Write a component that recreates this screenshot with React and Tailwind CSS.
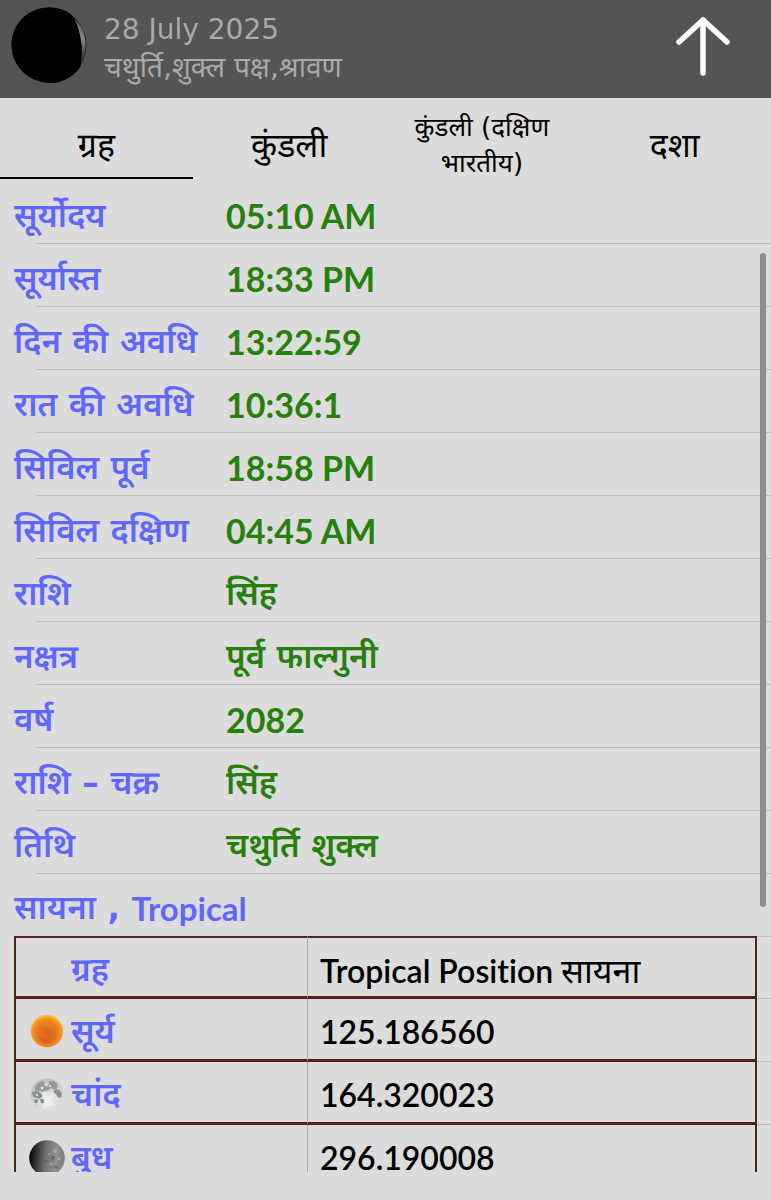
import { useState } from 'react';

const latinFont = "font-['Lato','Noto_Sans_Devanagari','Noto_Sans',sans-serif] [font-variant-ligatures:none]";
const hindiFont = "font-['DejaVu_Sans','Noto_Sans_Devanagari','Noto_Sans',sans-serif]";

const tabs = [
  { id: 'grah', label: 'ग्रह' },
  { id: 'kundli', label: 'कुंडली' },
  { id: 'kundli-south', label: 'कुंडली (दक्षिण भारतीय)', small: true },
  { id: 'dasha', label: 'दशा' },
];

const details = [
  { label: 'सूर्योदय', value: '05:10 AM' },
  { label: 'सूर्यास्त', value: '18:33 PM' },
  { label: 'दिन की अवधि', value: '13:22:59' },
  { label: 'रात की अवधि', value: '10:36:1' },
  { label: 'सिविल पूर्व', value: '18:58 PM' },
  { label: 'सिविल दक्षिण', value: '04:45 AM' },
  { label: 'राशि', value: 'सिंह', hindi: true },
  { label: 'नक्षत्र', value: 'पूर्व फाल्गुनी', hindi: true },
  { label: 'वर्ष', value: '2082' },
  { label: 'राशि – चक्र', value: 'सिंह', hindi: true },
  { label: 'तिथि', value: 'चथुर्ति शुक्ल', hindi: true },
];

const planets = [
  { name: 'सूर्य', position: '125.186560', Icon: SunIcon },
  { name: 'चांद', position: '164.320023', Icon: MoonIcon },
  { name: 'बुध', position: '296.190008', Icon: MercuryIcon },
];

function PhaseIcon() {
  return (
    <svg viewBox="0 0 76 76" className="w-[76px] h-[76px] shrink-0" aria-hidden="true">
      <defs>
        <linearGradient id="phase" x1="0" x2="0" y1="0" y2="1">
          <stop offset="0.1" stopColor="#666" />
          <stop offset="0.45" stopColor="#858585" />
          <stop offset="0.8" stopColor="#3c3c3c" />
        </linearGradient>
      </defs>
      <circle cx="38" cy="38" r="37.5" fill="#1c1c1c" />
      <path d="M62 11 C71 18 75 28 74.500 39 C74 48 72 54 70 59 C72 44 71 24 62 11Z" fill="url(#phase)" />
      <path d="M38 0.500 C50 0.500 58 4 63 11 C68 22 70 34 70.500 40 C70.500 48 70 54 69.500 60 C62 70 51 76 40 76 C18 76 0.500 59 0.500 38 C0.500 17 17 0.500 38 0.500Z" fill="#000" />
    </svg>
  );
}

function SunIcon() {
  return (
    <svg viewBox="0 0 36 36" className="w-9 h-9" aria-hidden="true">
      <defs>
        <radialGradient id="sun" cx="0.5" cy="0.56" r="0.52">
          <stop offset="0" stopColor="#dc6420" />
          <stop offset="0.6" stopColor="#e6791e" />
          <stop offset="0.88" stopColor="#f3971f" />
          <stop offset="1" stopColor="#fbbd3c" />
        </radialGradient>
        <filter id="sun-blur">
          <feGaussianBlur stdDeviation="1.5" />
        </filter>
      </defs>
      <circle cx="18" cy="17" r="16.300" fill="url(#sun)" />
      <g filter="url(#sun-blur)">
        <path d="M8 11q5-5 10-2t8-1q-3 6-9 4t-9-1z" fill="#ef8c1c" opacity="0.7" />
        <path d="M10 22q6 5 15 1q-3 7-9 6t-6-7z" fill="#cf541c" opacity="0.6" />
      </g>
    </svg>
  );
}

function MoonIcon() {
  return (
    <svg viewBox="0 0 36 36" className="w-9 h-9" aria-hidden="true">
      <defs>
        <radialGradient id="moon" cx="0.55" cy="0.65" r="0.6">
          <stop offset="0" stopColor="#ececec" />
          <stop offset="0.7" stopColor="#d6d8d8" />
          <stop offset="1" stopColor="#bcc0c0" />
        </radialGradient>
        <filter id="moon-blur">
          <feGaussianBlur stdDeviation="0.6" />
        </filter>
      </defs>
      <circle cx="18" cy="18" r="16.500" fill="url(#moon)" />
      <g fill="#869090" filter="url(#moon-blur)">
        <path d="M6 10q3-5 8-6q3 1 1 4q2 2 4 1q2-3 0-5q6-1 9 3q2 4-1 5q-3 1-5-1q-3 4-6 3q-3 2-5 0q-2 2-5-1z" opacity="0.8" />
        <path d="M3 15q4-2 7 0q4 2 3 5q-3 3-5 1q-5 0-5-6z" />
        <path d="M25 13q5-2 7 2q2 4-1 6q-3-1-4-4q-3-1-2-4z" />
        <path d="M11 22q4-1 5 2q-1 3-4 2z" />
        <circle cx="7" cy="24" r="2" />
      </g>
      <g fill="#f1f2f2" filter="url(#moon-blur)">
        <path d="M14 15l4 6l7-4l-3 8l6 3l-9 1l-5 3l1-7z" opacity="0.8" />
        <circle cx="13" cy="11" r="1.200" />
        <circle cx="21" cy="9" r="1" />
        <circle cx="8" cy="18" r="1" />
      </g>
    </svg>
  );
}

function MercuryIcon() {
  return (
    <svg viewBox="0 0 36 36" className="w-9 h-9" aria-hidden="true">
      <defs>
        <linearGradient id="mercury" x1="0" x2="1" y1="0" y2="0.1">
          <stop offset="0.08" stopColor="#090909" />
          <stop offset="0.22" stopColor="#2e2e2e" />
          <stop offset="0.5" stopColor="#707070" />
          <stop offset="0.8" stopColor="#8f8f8f" />
          <stop offset="1" stopColor="#7c7c7c" />
        </linearGradient>
        <filter id="mercury-blur">
          <feGaussianBlur stdDeviation="0.7" />
        </filter>
      </defs>
      <circle cx="18" cy="18" r="17.800" fill="url(#mercury)" />
      <g filter="url(#mercury-blur)" opacity="0.6">
        <g fill="#bcbcbc">
          <circle cx="26" cy="11" r="2" />
          <circle cx="30" cy="19" r="1.500" />
          <circle cx="22" cy="24" r="1.500" />
          <circle cx="20" cy="14" r="1" />
        </g>
        <g fill="#555">
          <circle cx="24" cy="18" r="2" />
          <circle cx="17" cy="21" r="1.500" />
          <circle cx="27" cy="27" r="1.500" />
        </g>
      </g>
    </svg>
  );
}

function Header() {
  return (
    <header className="h-[98px] shrink-0 flex items-start bg-[#545454] pl-[11px] pr-10">
      <div className="pt-[7px]">
        <PhaseIcon />
      </div>
      <div className="flex-1 pl-[17px] pt-[11px] text-[#a9a9a9]">
        <h1 className={`text-[28px] leading-[38px] ${hindiFont}`}>28 July 2025</h1>
        <p className={`text-[28px] leading-[38px] ${hindiFont}`}>चथुर्ति,शुक्ल पक्ष,श्रावण</p>
      </div>
      <button type="button" aria-label="ऊपर" className="mt-4 text-white">
        <svg viewBox="0 0 56 60" className="w-14 h-[60px]" fill="none" stroke="currentColor" strokeWidth="5.500" strokeLinecap="round" strokeLinejoin="round">
          <path d="M28 4V57" />
          <path d="M4 26L28 4L52 26" />
        </svg>
      </button>
    </header>
  );
}

function DetailRow({ label, value, hindi }) {
  return (
    <tr className="relative h-[63px] flex items-center pt-1.5 pl-[14px] text-left after:absolute after:left-9 after:right-0 after:bottom-0 after:h-px after:bg-[#bebebe]">
      <th scope="row" className={`w-[212px] shrink-0 font-semibold text-[#5f68fb] text-[33px] leading-10 whitespace-nowrap ${hindiFont}`}>{label}</th>
      <td className={`text-[#27800c] leading-10 ${hindi ? `text-[33px] font-semibold ${hindiFont}` : `text-[34px] font-bold ${latinFont}`}`}>{value}</td>
    </tr>
  );
}

const planetRow = 'h-[63px] grid grid-cols-[294px_1fr_14px] text-left';
const nameCell = 'flex items-center gap-1.5 pl-[13px] pt-1.5 border-l-2 border-r border-b-3 border-l-[#4f221c] border-r-[#ababab] border-b-[#4f221c]';
const nameText = `text-[33px] leading-10 font-semibold text-[#5f68fb] ${hindiFont}`;
const positionCell = `flex items-center pl-3 pt-1.5 border-r-2 border-b-3 border-[#4f221c] font-semibold text-[32px] leading-10 text-black ${latinFont}`;

function PlanetTable() {
  return (
    <table className="block pl-[14px]">
      <thead className="block">
        <tr className={planetRow}>
          <th scope="col" className={`${nameCell} border-t-2 border-t-[#4f221c]`}>
            <span className={`pl-[42px] ${nameText}`}>ग्रह</span>
          </th>
          <th scope="col" className={`${positionCell} border-t-2`}>
            <span>Tropical Position <span className="font-normal text-[34px]">सायना</span></span>
          </th>
          <td className="border-y border-[#bebebe]" />
        </tr>
      </thead>
      <tbody className="block">
        {planets.map(({ name, position, Icon }) => (
          <tr key={name} className={planetRow}>
            <th scope="row" className={nameCell}>
              <Icon />
              <span className={nameText}>{name}</span>
            </th>
            <td className={positionCell}>{position}</td>
            <td className="border-b border-[#bebebe]" />
          </tr>
        ))}
      </tbody>
    </table>
  );
}

export default function App() {
  const [active, setActive] = useState('grah');

  return (
    <div className="h-screen flex flex-col bg-[#dcdcdc] pb-7">
      <Header />
      <nav className="h-[83px] shrink-0 grid grid-cols-4">
        {tabs.map((tab) => (
          <button
            key={tab.id}
            type="button"
            onClick={() => setActive(tab.id)}
            className={`relative flex items-center justify-center px-5 pt-[11px] text-black after:absolute after:inset-x-0 after:bottom-0.5 after:h-0.5 ${hindiFont} ${active === tab.id ? 'after:bg-black' : 'after:bg-transparent'} ${tab.small ? 'text-[26px] leading-9' : 'text-[34px] leading-10'}`}
          >
            {tab.label}
          </button>
        ))}
      </nav>
      <main className="relative flex-1 min-h-0">
        <div className="h-full overflow-y-auto [scrollbar-width:none]">
          <table className="block">
            <tbody className="block">
              {details.map((row) => (
                <DetailRow key={row.label} {...row} />
              ))}
            </tbody>
          </table>
          <h2 className={`h-[62px] flex items-center pt-1.5 pl-[14px] text-[#5f68fb] text-[33px] leading-10 whitespace-pre ${hindiFont}`}>
            <span className="font-semibold">सायना , </span>
            <span className={`font-bold ${latinFont}`}>Tropical</span>
          </h2>
          <PlanetTable />
        </div>
        <div className="absolute right-[5px] top-18 h-[66%] w-[6px] rounded-full bg-[#8e8e8e]" />
      </main>
    </div>
  );
}
